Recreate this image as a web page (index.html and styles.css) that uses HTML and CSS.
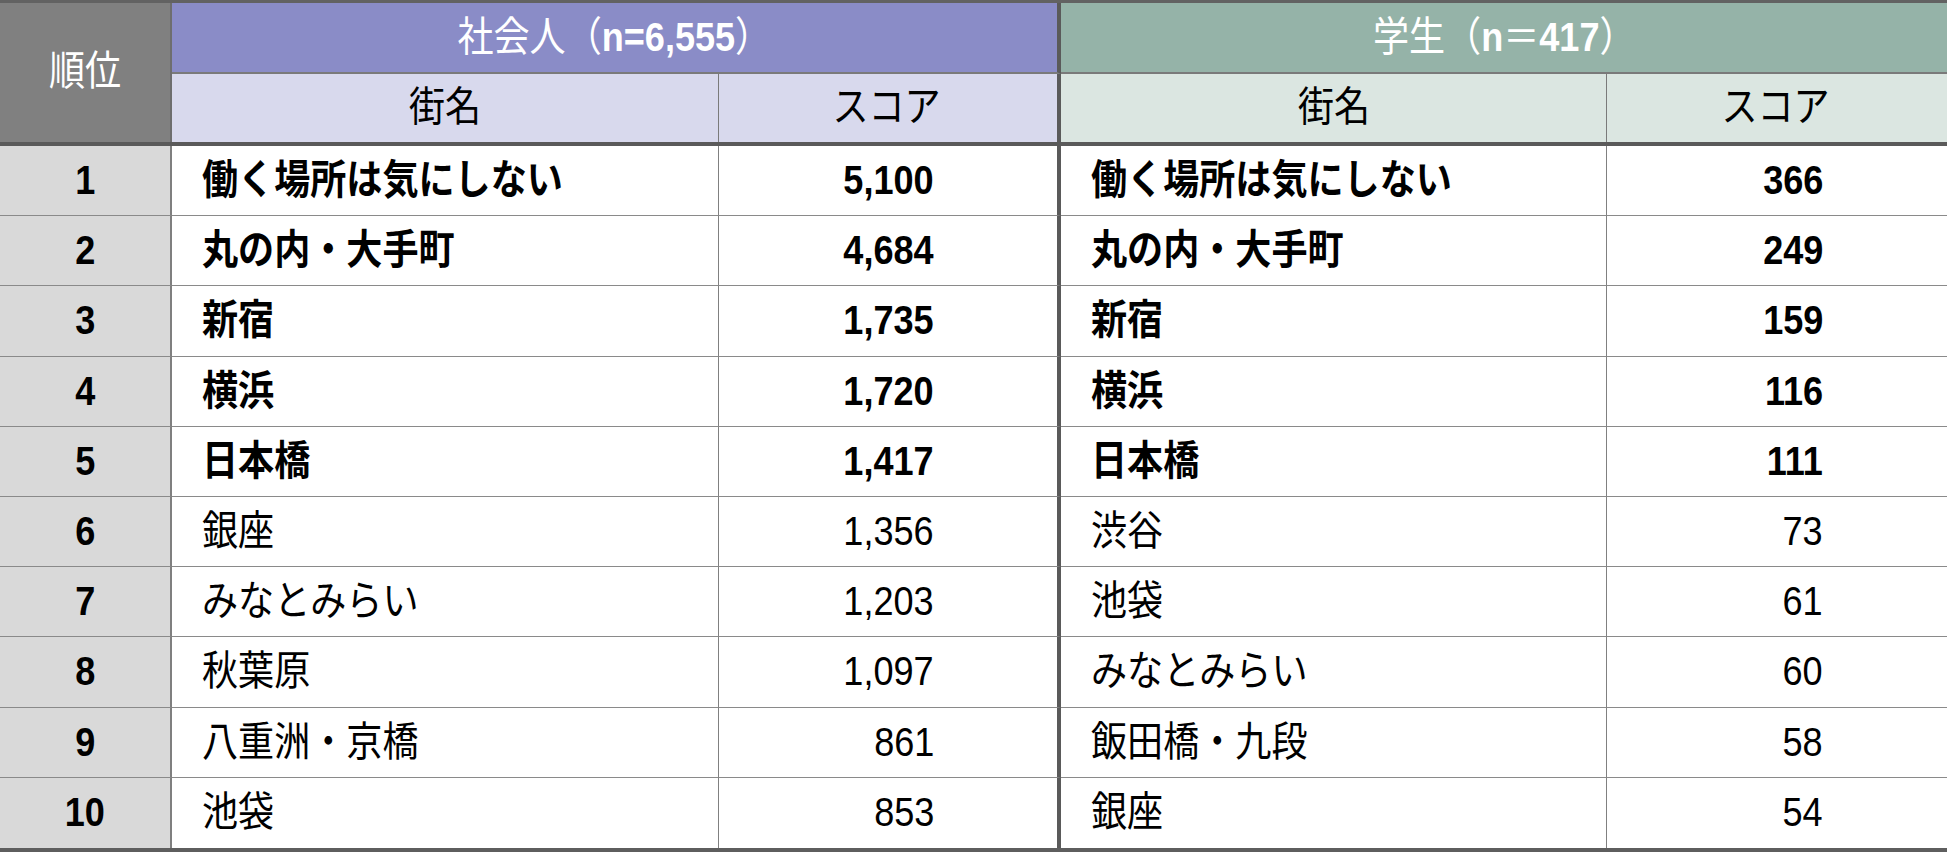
FILE: index.html
```html
<!DOCTYPE html>
<html lang="ja">
<head>
<meta charset="utf-8">
<title>街ランキング</title>
<link rel="stylesheet" href="styles.css">
</head>
<body>
<div class="table">
  <div class="head">
    <div class="rank-h"><span class="sx c">順位</span></div>
    <div class="grp grp1"><span class="sx c">社会人（<b>n=6,555</b>）</span></div>
    <div class="grp grp2"><span class="sx c">学生（<b>n</b>＝<b>417</b>）</span></div>
    <div class="sub sub1 name"><span class="sx c">街名</span></div>
    <div class="sub sub1 score sep"><span class="sx c">スコア</span></div>
    <div class="sub sub2 name"><span class="sx c">街名</span></div>
    <div class="sub sub2 score last"><span class="sx c">スコア</span></div>
  </div>
  <div class="body">
    <div class="row bold"><div class="rank"><span class="sx c">1</span></div><div class="nm"><span class="sx l">働く場所は気にしない</span></div><div class="sc sep"><span class="sx r">5,100</span></div><div class="nm"><span class="sx l">働く場所は気にしない</span></div><div class="sc"><span class="sx r">366</span></div></div>
    <div class="row bold"><div class="rank"><span class="sx c">2</span></div><div class="nm"><span class="sx l">丸の内・大手町</span></div><div class="sc sep"><span class="sx r">4,684</span></div><div class="nm"><span class="sx l">丸の内・大手町</span></div><div class="sc"><span class="sx r">249</span></div></div>
    <div class="row bold"><div class="rank"><span class="sx c">3</span></div><div class="nm"><span class="sx l">新宿</span></div><div class="sc sep"><span class="sx r">1,735</span></div><div class="nm"><span class="sx l">新宿</span></div><div class="sc"><span class="sx r">159</span></div></div>
    <div class="row bold"><div class="rank"><span class="sx c">4</span></div><div class="nm"><span class="sx l">横浜</span></div><div class="sc sep"><span class="sx r">1,720</span></div><div class="nm"><span class="sx l">横浜</span></div><div class="sc"><span class="sx r">116</span></div></div>
    <div class="row bold"><div class="rank"><span class="sx c">5</span></div><div class="nm"><span class="sx l">日本橋</span></div><div class="sc sep"><span class="sx r">1,417</span></div><div class="nm"><span class="sx l">日本橋</span></div><div class="sc"><span class="sx r">111</span></div></div>
    <div class="row"><div class="rank"><span class="sx c">6</span></div><div class="nm"><span class="sx l">銀座</span></div><div class="sc sep"><span class="sx r">1,356</span></div><div class="nm"><span class="sx l">渋谷</span></div><div class="sc"><span class="sx r">73</span></div></div>
    <div class="row"><div class="rank"><span class="sx c">7</span></div><div class="nm"><span class="sx l">みなとみらい</span></div><div class="sc sep"><span class="sx r">1,203</span></div><div class="nm"><span class="sx l">池袋</span></div><div class="sc"><span class="sx r">61</span></div></div>
    <div class="row"><div class="rank"><span class="sx c">8</span></div><div class="nm"><span class="sx l">秋葉原</span></div><div class="sc sep"><span class="sx r">1,097</span></div><div class="nm"><span class="sx l">みなとみらい</span></div><div class="sc"><span class="sx r">60</span></div></div>
    <div class="row"><div class="rank"><span class="sx c">9</span></div><div class="nm"><span class="sx l">八重洲・京橋</span></div><div class="sc sep"><span class="sx r">861</span></div><div class="nm"><span class="sx l">飯田橋・九段</span></div><div class="sc"><span class="sx r">58</span></div></div>
    <div class="row lastrow"><div class="rank"><span class="sx c">10</span></div><div class="nm"><span class="sx l">池袋</span></div><div class="sc sep"><span class="sx r">853</span></div><div class="nm"><span class="sx l">銀座</span></div><div class="sc"><span class="sx r">54</span></div></div>
  </div>
</div>
</body>
</html>
```
FILE: styles.css
```css
* { box-sizing: border-box; }
html, body { margin: 0; padding: 0; background: #ffffff; }
body {
  font-family: "Liberation Sans", "Noto Sans CJK JP", sans-serif;
  font-size: 41px;
  color: #000;
}
.table {
  width: 1947px;
  border-top: 3px solid #626262;
  border-bottom: 4px solid #5e5e5e;
}
.sx {
  display: inline-block;
  white-space: nowrap;
  transform: scaleX(0.88);
  line-height: 1;
}
.sx.c { transform-origin: center; }
.sx.l { transform-origin: left center; }
.sx.r { transform-origin: right center; }

.head {
  display: grid;
  grid-template-columns: 172px 547px 342px 546px 340px;
  grid-template-rows: 71px 68px;
  border-bottom: 4px solid #5a5a5a;
}
.rank-h {
  grid-row: 1 / 3;
  grid-column: 1;
  background: #808080;
  color: #fff;
  border-right: 2px solid #6e6e6e;
  display: flex;
  align-items: center;
  justify-content: center;
  padding-bottom: 2px;
}
.grp {
  color: #fff;
  display: flex;
  align-items: center;
  justify-content: center;
  border-bottom: 2px solid #7a7a7a;
  padding-bottom: 1px;
}
.grp b { font-weight: 700; }
.grp1 { grid-column: 2 / 4; background: #8a8cc7; border-right: 4px solid #5a5a5a; }
.grp2 { grid-column: 4 / 6; background: #95b3a8; }
.sub {
  display: flex;
  align-items: center;
  justify-content: center;
  padding-bottom: 2px;
}
.sub1 { background: #d8d9ed; }
.sub2 { background: #dbe6e1; }
.sub.name { border-right: 1px solid #7a7a7a; }
.sub.score { padding-right: 4px; }
.sub.sep { border-right: 4px solid #5a5a5a; }

.body { display: flex; flex-direction: column; }
.row {
  display: grid;
  grid-template-columns: 172px 547px 342px 546px 340px;
  height: 70.2px;
}
.row > div {
  display: flex;
  align-items: center;
  border-bottom: 1px solid #8a8a8a;
}
.row.lastrow > div { border-bottom: none; }
.rank {
  background: #d9d9d9;
  border-right: 2px solid #7f7f7f;
  justify-content: center;
  font-weight: 700;
}
.nm {
  padding-left: 30px;
  border-right: 1px solid #808080;
}
.sc {
  justify-content: flex-end;
  padding-right: 124px;
}
.sc.sep {
  border-right: 4px solid #5a5a5a;
  padding-right: 123px;
}
.row.bold .nm, .row.bold .sc { font-weight: 700; }
```
